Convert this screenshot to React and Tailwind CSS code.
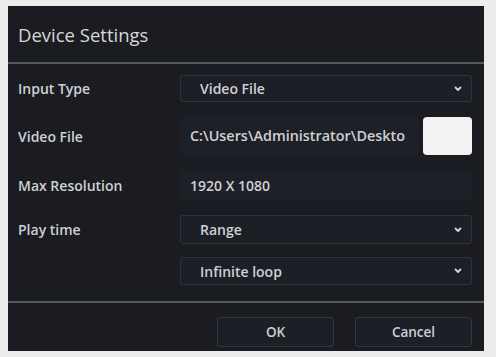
import React from 'react';

const font = { fontFamily: '"Open Sans", "Noto Sans", sans-serif' };

const Chevron = () => (
  <svg width="10" height="10" viewBox="0 0 10 10" className="text-gray-300">
    <path d="M2.5 3.5 L5 6 L7.5 3.5" fill="none" stroke="currentColor" strokeWidth="1.8" strokeLinecap="round" strokeLinejoin="round" />
  </svg>
);

const Select = ({ value, className }) => (
  <div className={`flex items-center justify-between rounded-[3px] border border-[#30333b] bg-[#1d1f26] pl-[19px] pr-[8px] ${className}`}>
    <span className="text-[14px] font-semibold text-[#cfd0d4]">{value}</span>
    <Chevron />
  </div>
);

const Label = ({ children }) => (
  <div className="w-[162px] shrink-0 text-[14px] font-semibold text-[#cfd0d4]">{children}</div>
);

export default function App() {
  return (
    <div className="h-[357px] w-[496px] bg-[#ececec] pl-[8px] pt-[6px]" style={font}>
      <div className="flex h-[345px] w-[476px] flex-col bg-[#1a1c21]">
        <div className="flex h-[56px] items-center pl-[10px] pt-[2px] text-[18.5px] font-medium text-[#d6d7da]">
          Device Settings
        </div>
        <div className="h-[2px] bg-[#555860]" />
        <div className="flex flex-col pl-[10px] pr-[12px] pt-[11px]">
          <div className="flex items-center">
            <Label>Input Type</Label>
            <Select value="Video File" className="h-[27px] flex-1" />
          </div>
          <div className="mt-[15px] flex items-center">
            <Label>Video File</Label>
            <div className="flex h-[38px] flex-1 items-center gap-[4px]">
              <div className="flex h-full flex-1 items-center rounded-[3px] bg-[#1e2027] pl-[10px] text-[14.4px] font-semibold text-[#cfd0d4]">
                C:\Users\Administrator\Deskto
              </div>
              <button className="h-[38px] w-[49px] rounded-[4px] bg-[#f2f2f2]" />
            </div>
          </div>
          <div className="mt-[15px] flex items-center">
            <Label>Max Resolution</Label>
            <div className="flex h-[30px] flex-1 items-center rounded-[3px] bg-[#1e2027] pl-[10px] text-[14px] font-semibold text-[#cfd0d4]">
              1920 X 1080
            </div>
          </div>
          <div className="mt-[15px] flex items-center">
            <Label>Play time</Label>
            <Select value="Range" className="h-[29px] flex-1" />
          </div>
          <div className="mt-[13px] flex items-center">
            <Label />
            <Select value="Infinite loop" className="h-[28px] flex-1" />
          </div>
        </div>
        <div className="mt-[16px] h-[2px] bg-[#555860]" />
        <div className="flex justify-end gap-[21px] pr-[12px] pt-[14px]">
          <button className="h-[30px] w-[117px] rounded-[3px] border border-[#32353d] bg-[#1d1f26] text-[13.5px] font-semibold text-[#cfd0d4]">
            OK
          </button>
          <button className="h-[30px] w-[117px] rounded-[3px] border border-[#32353d] bg-[#1d1f26] text-[13.5px] font-semibold text-[#cfd0d4]">
            Cancel
          </button>
        </div>
      </div>
    </div>
  );
}
